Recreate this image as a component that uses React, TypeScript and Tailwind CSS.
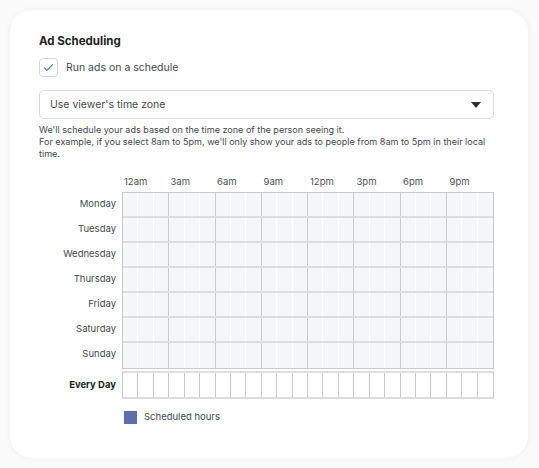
const DAYS = ["Monday", "Tuesday", "Wednesday", "Thursday", "Friday", "Saturday", "Sunday"];
const HOURS = ["12am", "3am", "6am", "9am", "12pm", "3pm", "6pm", "9pm"];
const CELLS = Array.from({ length: 24 }, (_, i) => i);

function DayRow({ last }: { last: boolean }) {
  return (
    <div className={"grid h-[25px] grid-cols-24 " + (last ? "" : "border-b-2 border-[#dcdddf]")}>
      {CELLS.map((i) => (
        <div
          key={i}
          className={
            "bg-[#f5f6f7] " +
            (i === 23 ? "" : i % 3 === 2 ? "border-r border-[#c9cacc]" : "border-r border-white")
          }
        />
      ))}
    </div>
  );
}

export default function App() {
  return (
    <div
      className="min-h-[468px] bg-[#fafafa] p-[10px] text-[#4b4f56]"
      style={{ fontFamily: "Inter, 'Liberation Sans', sans-serif" }}
    >
      <div className="h-[448px] w-[518px] rounded-[22px] bg-white px-[29px] pt-[24px] shadow-[0_0_6px_rgba(0,0,0,0.06)]">
        <h2 className="text-[11.5px] font-bold leading-[14px] text-[#1c1e21]">Ad Scheduling</h2>

        <label className="mt-[10px] flex items-center gap-[8px]">
          <span className="flex h-[19px] w-[19px] items-center justify-center rounded-[4px] border border-[#d5d6d8] bg-white">
            <svg viewBox="0 0 16 16" className="h-[13px] w-[13px]" fill="none" stroke="#4a7fd4" strokeWidth="1.5" strokeLinecap="round" strokeLinejoin="round">
              <path d="M3 8.5l3 3 7-7" />
            </svg>
          </span>
          <span className="text-[10.5px] text-[#444950]">Run ads on a schedule</span>
        </label>

        <div className="mt-[13px] flex h-[29px] w-[455px] items-center justify-between rounded-[5px] border border-[#dadbdd] pl-[10px] pr-[12px]">
          <span className="text-[10.5px] text-[#444950]">Use viewer's time zone</span>
          <svg viewBox="0 0 10 6" className="h-[6px] w-[10px]">
            <path d="M0 0h10L5 6z" fill="#333" />
          </svg>
        </div>

        <p className="mt-[5px] text-[9.05px] leading-[12px] text-[#444950]">
          We'll schedule your ads based on the time zone of the person seeing it.
          <br />
          For example, if you select 8am to 5pm, we'll only show your ads to people from 8am to 5pm in their local time.
        </p>

        <div className="mt-[15px] flex">
          <div className="w-[83px] shrink-0 pr-[6px] pt-[17px] text-right text-[9.5px] text-[#444950]">
            {DAYS.map((d) => (
              <div key={d} className="flex h-[25px] items-center justify-end">
                {d}
              </div>
            ))}
            <div className="mt-[5px] flex h-[26px] items-center justify-end font-bold text-[#1c1e21]">Every Day</div>
          </div>

          <div className="w-[372px]">
            <div className="grid h-[16px] grid-cols-8 text-[9.5px] leading-[14px]">
              {HOURS.map((h) => (
                <div key={h} className="pl-[2px]">
                  {h}
                </div>
              ))}
            </div>
            <div className="mt-[1px] border border-[#c9cacc]">
              {DAYS.map((d, i) => (
                <DayRow key={d} last={i === DAYS.length - 1} />
              ))}
            </div>
            <div className="mt-[2px] grid h-[28px] grid-cols-24 border-x border-y-2 border-x-[#c9cacc] border-y-[#dcdddf]">
              {CELLS.map((i) => (
                <div key={i} className={"bg-white " + (i === 23 ? "" : "border-r border-[#c9cacc]")} />
              ))}
            </div>

            <div className="mt-[11px] flex items-center gap-[7px] pl-[2px]">
              <span className="h-[13px] w-[13px] bg-[#5a6fae]" />
              <span className="text-[9.5px] text-[#444950]">Scheduled hours</span>
            </div>
          </div>
        </div>
      </div>
    </div>
  );
}
